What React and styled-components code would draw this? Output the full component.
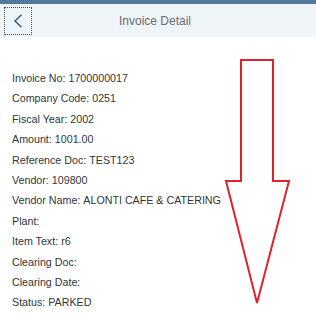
import React from 'react';
import styled, { createGlobalStyle } from 'styled-components';

const GlobalStyle = createGlobalStyle`
  html, body {
    margin: 0;
    padding: 0;
    background: #ffffff;
  }
  body {
    font-family: 'Liberation Sans', Arial, sans-serif;
  }
`;

const Page = styled.div`
  position: relative;
  width: 316px;
  height: 318px;
  overflow: hidden;
  background: #ffffff;
`;

const Header = styled.header`
  display: grid;
  grid-template-columns: 40px 1fr 40px;
  align-items: center;
  height: 33px;
  border-top: 4px solid #52789b;
  background: #eff4f9;
`;

const BackButton = styled.button`
  display: flex;
  align-items: center;
  justify-content: center;
  width: 28px;
  height: 28px;
  margin-left: 4px;
  padding: 0;
  background: transparent;
  border: 1px dotted #4a4a4a;
  color: #346187;
  cursor: pointer;
`;

const Title = styled.h1`
  margin: 0;
  text-align: center;
  font-size: 12px;
  font-weight: normal;
  color: #6a6d70;
  transform: translateX(-3px);
`;

const Details = styled.dl`
  margin: 0;
  padding: 31px 12px 0;
  font-size: 10.7px;
  line-height: 20.4px;
  color: #32363a;
`;

const Row = styled.div`
  display: flex;
  gap: 3px;
  white-space: nowrap;
`;

const Label = styled.dt`
  margin: 0;
`;

const Value = styled.dd`
  margin: 0;
`;

const ArrowOverlay = styled.svg`
  position: absolute;
  left: 0;
  top: 0;
  pointer-events: none;
`;

const fields = [
  ['Invoice No:', '1700000017'],
  ['Company Code:', '0251'],
  ['Fiscal Year:', '2002'],
  ['Amount:', '1001.00'],
  ['Reference Doc:', 'TEST123'],
  ['Vendor:', '109800'],
  ['Vendor Name:', 'ALONTI CAFE & CATERING'],
  ['Plant:', ''],
  ['Item Text:', 'r6'],
  ['Clearing Doc:', ''],
  ['Clearing Date:', ''],
  ['Status:', 'PARKED'],
];

const App = () => (
  <Page>
    <GlobalStyle />
    <Header>
      <BackButton aria-label="Back">
        <svg width="12" height="16" viewBox="0 0 12 16">
          <path d="M9.5 1.8 L3 8 L9.5 14.2" fill="none" stroke="currentColor" strokeWidth="1.5" />
        </svg>
      </BackButton>
      <Title>Invoice Detail</Title>
      <span />
    </Header>
    <Details>
      {fields.map(([label, value]) => (
        <Row key={label}>
          <Label>{label}</Label>
          <Value>{value}</Value>
        </Row>
      ))}
    </Details>
    {/* red annotation arrow drawn over the page */}
    <ArrowOverlay width="316" height="318" viewBox="0 0 316 318">
      <polygon
        points="241,60 273,60 273,181 289,181 257,303 226,181 241,181"
        fill="none"
        stroke="#e0222c"
        strokeWidth="2"
        strokeLinejoin="miter"
      />
    </ArrowOverlay>
  </Page>
);

export default App;
